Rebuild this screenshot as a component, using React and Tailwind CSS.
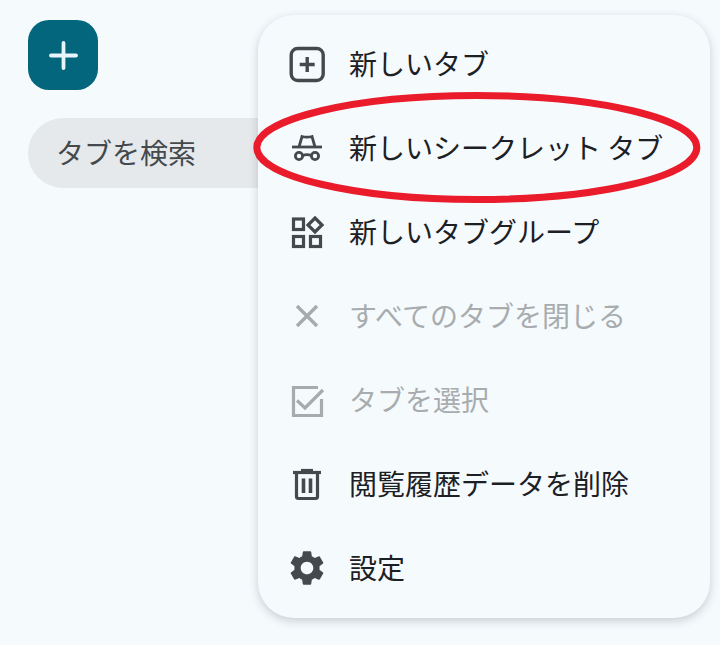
import { Plus } from "lucide-react";

function PlusBoxIcon() {
  return (
    <svg width="42" height="42" viewBox="0 0 42 42" fill="none" stroke="currentColor" strokeWidth="3.4">
      <rect x="5.2" y="5.5" width="32" height="32" rx="6.5" />
      <path d="M21.2 14v15M13.7 21.5h15" />
    </svg>
  );
}

function IncognitoIcon() {
  return (
    <svg width="42" height="42" viewBox="0 0 42 42" fill="none" stroke="currentColor" strokeWidth="2.8">
      <path d="M6 20h30" />
      <path d="M13 20l3-10.5q5 1.2 10 0L29 20" />
      <circle cx="13" cy="29" r="3.6" />
      <circle cx="29" cy="29" r="3.6" />
      <path d="M16.6 28.5q4.4-1.6 8.8 0" />
    </svg>
  );
}

function GroupsIcon() {
  return (
    <svg width="42" height="42" viewBox="0 0 42 42" fill="none" stroke="currentColor" strokeWidth="3.2">
      <rect x="7.5" y="8" width="10" height="10.5" />
      <rect x="7.5" y="25.5" width="10" height="10" />
      <rect x="24.5" y="25.5" width="10" height="10" />
      <path d="M29 7l7 7-7 7-7-7z" />
    </svg>
  );
}

function CloseIcon() {
  return (
    <svg width="42" height="42" viewBox="0 0 42 42" fill="none" stroke="currentColor" strokeWidth="3.4">
      <path d="M11 11l20 20M31 11L11 31" />
    </svg>
  );
}

function CheckBoxIcon() {
  return (
    <svg width="42" height="42" viewBox="0 0 42 42" fill="none" stroke="currentColor" strokeWidth="3.2">
      <path d="M32 8.5H7.5V36.5H35.5V20" />
      <path d="M11 21.5l8 7.5L37 11" />
    </svg>
  );
}

function TrashIcon() {
  return (
    <svg width="42" height="42" viewBox="0 0 42 42" fill="none" stroke="currentColor" strokeWidth="3.2">
      <path d="M7 9.5h28" />
      <path d="M15 7.5h12" />
      <path d="M10.5 10v23.5q0 2 2 2h17q2 0 2-2V10" />
      <path d="M17.5 15.5v14.5M24.5 15.5v14.5" strokeWidth="3.6" />
    </svg>
  );
}

function GearIcon() {
  return (
    <svg width="42" height="42" viewBox="0 0 24 24" fill="currentColor">
      <path d="M19.14 12.94c.04-.3.06-.61.06-.94 0-.32-.02-.64-.07-.94l2.03-1.58c.18-.14.23-.41.12-.61l-1.92-3.32c-.12-.22-.37-.29-.59-.22l-2.39.96c-.5-.38-1.03-.7-1.62-.94l-.36-2.54c-.04-.24-.24-.41-.48-.41h-3.84c-.24 0-.43.17-.47.41l-.36 2.54c-.59.24-1.13.57-1.62.94l-2.39-.96c-.22-.08-.47 0-.59.22L2.74 8.87c-.12.21-.08.47.12.61l2.03 1.58c-.05.3-.09.63-.09.94s.02.64.07.94l-2.03 1.58c-.18.14-.23.41-.12.61l1.92 3.32c.12.22.37.29.59.22l2.39-.96c.5.38 1.03.7 1.62.94l.36 2.54c.05.24.24.41.48.41h3.84c.24 0 .44-.17.47-.41l.36-2.54c.59-.24 1.13-.56 1.62-.94l2.39.96c.22.08.47 0 .59-.22l1.92-3.32c.12-.22.07-.47-.12-.61l-2.01-1.58zM12 15.6c-1.98 0-3.6-1.62-3.6-3.6s1.62-3.6 3.6-3.6 3.6 1.62 3.6 3.6-1.62 3.6-3.6 3.6z" />
    </svg>
  );
}

const menuItems = [
  { label: "新しいタブ", icon: PlusBoxIcon },
  { label: "新しいシークレット タブ", icon: IncognitoIcon },
  { label: "新しいタブグループ", icon: GroupsIcon },
  { label: "すべてのタブを閉じる", icon: CloseIcon, disabled: true },
  { label: "タブを選択", icon: CheckBoxIcon, disabled: true },
  { label: "閲覧履歴データを削除", icon: TrashIcon },
  { label: "設定", icon: GearIcon },
];

export default function App() {
  return (
    <div className="relative w-[720px] h-[645px] overflow-hidden bg-[#f5fafd] font-['Noto_Sans_CJK_JP','Noto_Sans',sans-serif]">
      <div className="flex flex-col pt-5 pl-7">
        <button className="w-[70px] h-[70px] rounded-[21px] bg-[#04667c] text-[#e6f6fb] flex items-center justify-center">
          <Plus size={43} strokeWidth={2.1} />
        </button>
        <div className="mt-7 w-[402px] h-[70px] rounded-[35px] bg-[#e5e9eb] pl-[28px] pb-[2px] flex items-center text-[28px] text-[#44494d]">
          タブを検索
        </div>
      </div>

      <div className="absolute left-[258px] top-[15px] w-[452px] h-[603px] pt-[7px] rounded-[36px] bg-[#f5fafd] shadow-[0_3px_10px_rgba(40,50,60,0.22)]">
        {menuItems.map((item) => {
          const Icon = item.icon;
          return (
            <div key={item.label} className="h-[84px] pl-7 flex items-center gap-[21px]">
              <span className={item.disabled ? "text-[#a6abae]" : "text-[#43494d]"}>
                <Icon />
              </span>
              <span className={`mb-[2px] text-[28px] whitespace-nowrap ${item.disabled ? "text-[#a8acae]" : "text-[#1c2024]"}`}>
                {item.label}
              </span>
            </div>
          );
        })}
      </div>

      {/* hand-drawn annotation over the screenshot */}
      <svg className="absolute left-0 top-0 pointer-events-none" width="720" height="645" fill="none">
        <ellipse cx="476.8" cy="147.5" rx="220" ry="52" stroke="#ea1c2c" strokeWidth="7" />
      </svg>
    </div>
  );
}
